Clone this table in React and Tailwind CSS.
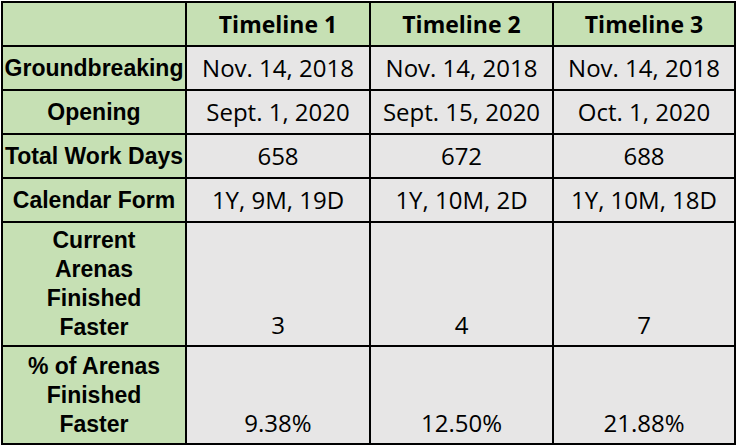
const columns = ['Timeline 1', 'Timeline 2', 'Timeline 3'];

const rows = [
  { label: ['Groundbreaking'], values: ['Nov. 14, 2018', 'Nov. 14, 2018', 'Nov. 14, 2018'] },
  { label: ['Opening'], values: ['Sept. 1, 2020', 'Sept. 15, 2020', 'Oct. 1, 2020'] },
  { label: ['Total Work Days'], values: ['658', '672', '688'] },
  { label: ['Calendar Form'], values: ['1Y, 9M, 19D', '1Y, 10M, 2D', '1Y, 10M, 18D'] },
  { label: ['Current', 'Arenas', 'Finished', 'Faster'], values: ['3', '4', '7'], tall: true },
  { label: ['% of Arenas', 'Finished', 'Faster'], values: ['9.38%', '12.50%', '21.88%'], tall: true },
];

const labelFont = "font-['Liberation_Sans',Arial,sans-serif]";
const dataFont = "font-['Open_Sans',sans-serif]";

export default function App() {
  return (
    <div className="w-[739px] h-[445px] bg-white pt-px pl-px">
      <div className="grid w-[735px] grid-cols-[182px_182px_181px_180px] grid-rows-[42px_42px_42px_42px_42px_122px_96px] gap-[2px] bg-black p-[2px]">
        {/* header row */}
        <div className="bg-[#c6e0b4]" />
        {columns.map((c) => (
          <div
            key={c}
            className={`bg-[#c6e0b4] flex items-center justify-center text-[23px] font-bold text-black ${dataFont}`}
          >
            {c}
          </div>
        ))}

        {rows.map((r, i) => (
          <Row key={i} row={r} />
        ))}
      </div>
    </div>
  );
}

function Row({ row }) {
  return (
    <>
      <div
        className={`bg-[#c6e0b4] flex flex-col items-center justify-center whitespace-nowrap text-[23px] font-bold leading-[29px] text-black ${labelFont}`}
      >
        {row.label.map((l) => (
          <span key={l}>{l}</span>
        ))}
      </div>
      {row.values.map((v, j) => (
        <div
          key={j}
          className={`bg-[#e7e6e6] flex justify-center whitespace-nowrap text-[24px] text-black ${dataFont} ${
            row.tall ? 'items-end pb-[2px]' : 'items-center'
          }`}
        >
          {v}
        </div>
      ))}
    </>
  );
}
